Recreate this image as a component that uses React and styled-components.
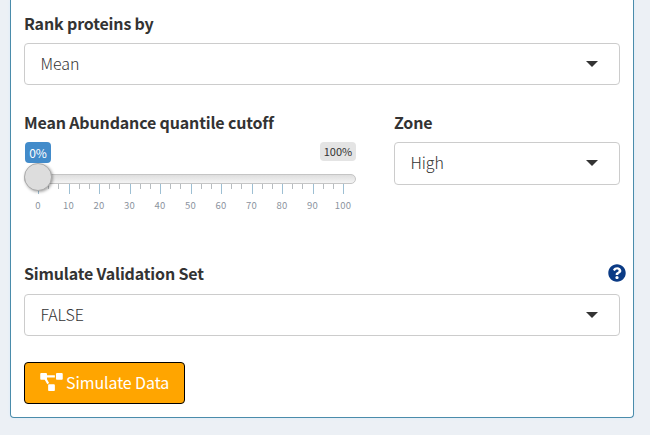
import React from "react";
import styled, { createGlobalStyle } from "styled-components";
import { FaProjectDiagram, FaQuestionCircle } from "react-icons/fa";

const GlobalStyle = createGlobalStyle`
  * { box-sizing: border-box; }
  body {
    margin: 0;
    background: #ecf0f5;
    color: #333;
    font-family: "Noto Sans CJK SC", "Open Sans", sans-serif;
    font-size: 16px;
    overflow: hidden;
  }
`;

const Page = styled.main`
  height: 435px;
  padding: 0 16px 17px 10px;
`;

const Card = styled.section`
  height: 418px;
  padding: 12px 13px 0;
  background: #fff;
  border: 1px solid #4a8cab;
  border-top: 0;
  border-radius: 0 0 4px 4px;
  box-shadow: 0 0 3px #dbeafa;
`;

const Field = styled.div`
  display: flex;
  flex-direction: column;
  margin-bottom: ${(p) => p.$gap || 0}px;
`;

const LabelRow = styled.div`
  display: flex;
  align-items: center;
  justify-content: space-between;
  height: 22px;
  margin-bottom: ${(p) => p.$space || 9}px;
  margin-right: -6px;
`;

const Label = styled.label`
  font-weight: 700;
  font-size: 16px;
  line-height: 22px;
  white-space: nowrap;
  letter-spacing: -0.16px;
`;

const HelpIcon = styled(FaQuestionCircle)`
  width: 18px;
  height: 18px;
  color: #0b3b85;
`;

const SelectBox = styled.div`
  display: flex;
  align-items: center;
  justify-content: space-between;
  height: ${(p) => p.$height || 42}px;
  padding: 0 21px 0 15.5px;
  border: 1px solid #ccc;
  border-radius: 4px;
  font-weight: 300;
  line-height: 24px;
`;

const SelectValue = styled.span`
  padding-bottom: 3px;
  letter-spacing: -0.08px;
`;

const Caret = styled.span`
  border: 6px solid transparent;
  border-top-color: #333;
  border-bottom: 0;
  margin-bottom: 1px;
`;

const Columns = styled.div`
  display: grid;
  grid-template-columns: 332px 226px;
  gap: 38px;
  height: 151px;
`;

const Slider = styled.div`
  position: relative;
  height: 74px;
`;

const Bubble = styled.span`
  position: absolute;
  top: 0;
  display: flex;
  align-items: center;
  justify-content: center;
  border-radius: 4px;
  white-space: nowrap;
`;

const ValueBubble = styled(Bubble)`
  left: 1px;
  width: 26px;
  height: 21px;
  background: #428bca;
  color: #fff;
  font-size: 12px;
`;

const MaxBubble = styled(Bubble)`
  right: 0;
  width: 36px;
  height: 19px;
  padding-bottom: 1px;
  background: #e4e4e4;
  font-size: 11px;
`;

const Track = styled.div`
  position: absolute;
  top: 32px;
  left: 0;
  width: 332px;
  height: 10px;
  border: 1px solid #c5c5c5;
  border-radius: 8px;
  background: linear-gradient(#dedede, #f4f4f4);
`;

const Handle = styled.div`
  position: absolute;
  top: 21px;
  left: 0;
  width: 28px;
  height: 28px;
  border: 1px solid #aaa;
  border-radius: 50%;
  background: #ddd;
  box-shadow: 1px 1px 3px rgba(0, 0, 0, 0.35);
`;

const Tick = styled.span`
  position: absolute;
  top: 42px;
  left: ${(p) => 14 + p.$at * 3.05}px;
  width: 1px;
  height: ${(p) => (p.$major ? 10 : 5)}px;
  background: ${(p) => (p.$major ? "#9dbfd3" : "#b8bdc0")};
`;

const TickLabel = styled.span`
  position: absolute;
  top: 56px;
  left: ${(p) => p.$at * 3.05 - 1}px;
  width: 30px;
  text-align: center;
  color: #8b939e;
  font-size: 9.5px;
  line-height: 14px;
  letter-spacing: 0.3px;
`;

const Button = styled.button`
  display: flex;
  align-items: center;
  gap: 3px;
  width: 161px;
  height: 42px;
  padding: 0 0 0 15px;
  border: 1px solid #000;
  border-radius: 4px;
  background: #ffa500;
  color: #fff;
  font: inherit;
  letter-spacing: -0.1px;
  white-space: nowrap;
`;

const ButtonText = styled.span`
  padding-bottom: 2px;
`;

const DiagramIcon = styled(FaProjectDiagram)`
  flex: none;
  width: 23px;
  height: 18px;
  margin-bottom: 2px;
`;

function Select({ value, height }) {
  return (
    <SelectBox $height={height}>
      <SelectValue>{value}</SelectValue>
      <Caret />
    </SelectBox>
  );
}

const majorTicks = Array.from({ length: 11 }, (_, i) => i * 10);
const minorTicks = majorTicks.slice(0, -1).flatMap((v) => [v + 10 / 3, v + 20 / 3]);

function RangeSlider() {
  return (
    <Slider>
      <Track />
      {minorTicks.map((v) => <Tick key={v} $at={v} />)}
      {majorTicks.map((v) => <Tick key={v} $at={v} $major />)}
      {majorTicks.map((v) => <TickLabel key={v} $at={v}>{v}</TickLabel>)}
      <Handle />
      <ValueBubble>0%</ValueBubble>
      <MaxBubble>100%</MaxBubble>
    </Slider>
  );
}

export default function App() {
  return (
    <>
      <GlobalStyle />
      <Page>
        <Card>
          <Field $gap={26}>
            <LabelRow><Label>Rank proteins by</Label></LabelRow>
            <Select value="Mean" />
          </Field>
          <Columns>
            <Field>
              <LabelRow><Label>Mean Abundance quantile cutoff</Label></LabelRow>
              <RangeSlider />
            </Field>
            <Field>
              <LabelRow><Label>Zone</Label></LabelRow>
              <Select value="High" height={43} />
            </Field>
          </Columns>
          <Field $gap={26}>
            <LabelRow $space={10}>
              <Label>Simulate Validation Set</Label>
              <HelpIcon />
            </LabelRow>
            <Select value="FALSE" />
          </Field>
          <Button><DiagramIcon /><ButtonText>Simulate Data</ButtonText></Button>
        </Card>
      </Page>
    </>
  );
}
